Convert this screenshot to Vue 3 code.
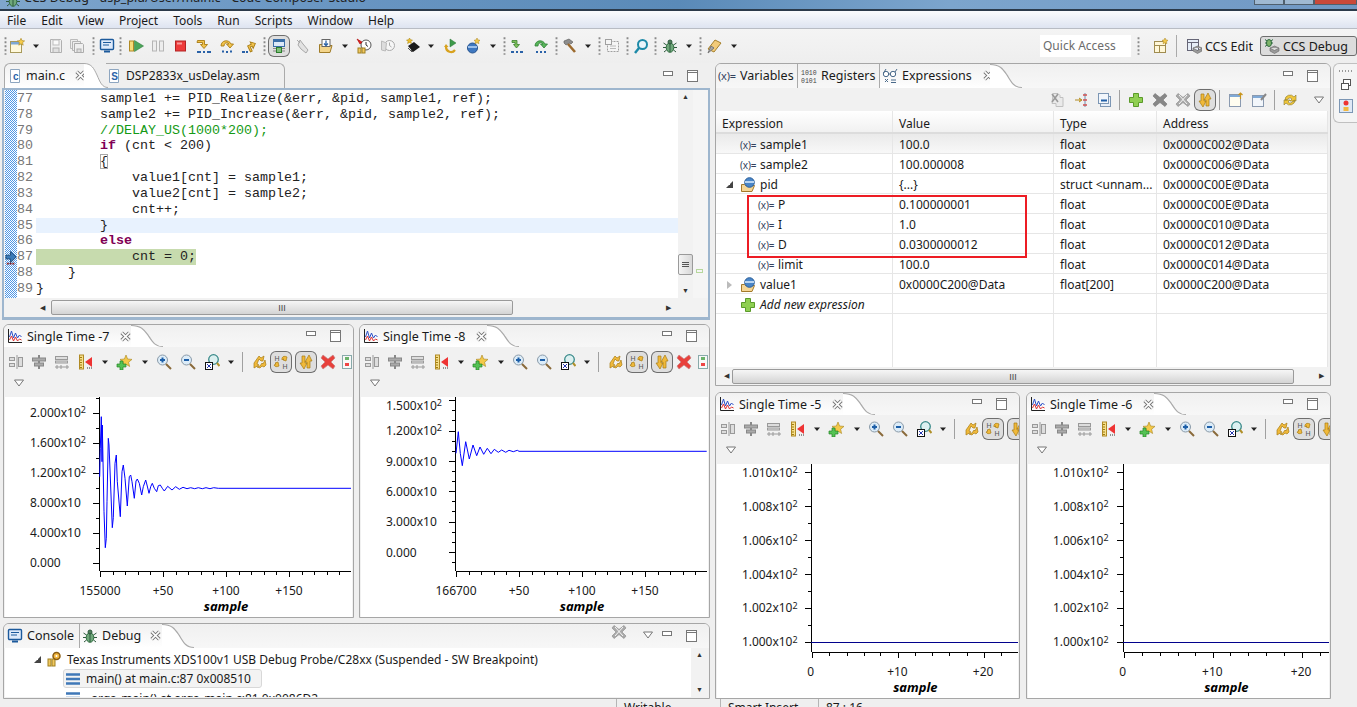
<template>
  <div class="page">
    <div class="titlebar">
      <svg class="ico title-ico" viewBox="0 0 16 16" v-html="icons.bug"></svg>
      <span class="title-text">CCS Debug - dsp_pid/User/main.c - Code Composer Studio</span>
      <div class="win-btns"><i></i><i></i><i class="red"></i></div>
    </div>
    <div class="menubar">
      <span v-for="m in menus" :key="m">{{ m }}</span>
    </div>
    <div class="toolbar">
      <div class="tools main-tools">
        <svg v-for="(t, i) in mainTools" :key="i" viewBox="0 0 16 16" preserveAspectRatio="none" :class="['ico', t.kind, { on: t.on }]" :style="{ marginLeft: t.gap + 'px' }" v-html="icons[t.name]"></svg>
      </div>
      <div class="quick">Quick Access</div>
      <svg class="ico grip grip-q" viewBox="0 0 16 16" preserveAspectRatio="none" v-html="icons.grip"></svg>
      <svg class="ico persp-open" viewBox="0 0 16 16" v-html="icons.persp"></svg>
      <div class="persp-sep"></div>
      <div class="persp">
        <svg class="ico" viewBox="0 0 16 16" v-html="icons.edit"></svg>CCS Edit
      </div>
      <div class="persp active">
        <svg class="ico" viewBox="0 0 16 16" v-html="icons.bugdb"></svg>CCS Debug
      </div>
    </div>

    <div class="workspace">
      <div class="col-left">
        <section class="panel editor">
          <div class="tabs">
            <div class="tab active main-tab">
              <svg class="ico" viewBox="0 0 16 16" v-html="icons.cfile"></svg><span>main.c</span>
              <svg class="close" viewBox="0 0 10 10" v-html="icons.close"></svg>
            </div>
            <svg class="curve" viewBox="0 0 24 25" preserveAspectRatio="none"><path d="M0 .5C8 .5 10 6 13 12 16 19 18 24.5 24 24.5V25H0Z" fill="#fff" /><path d="M0 .5C8 .5 10 6 13 12 16 19 18 24.5 24 24.5" fill="none" stroke="#aaa" /></svg>
            <div class="tab plain dsp">
              <svg class="ico" viewBox="0 0 16 16" v-html="icons.sfile"></svg><span>DSP2833x_usDelay.asm</span>
            </div>
            <div class="win-ctl"><svg viewBox="0 0 40 14" v-html="icons.minmax"></svg></div>
          </div>
          <div class="editor-body">
            <div class="editor-main">
              <div class="overview"></div>
              <svg class="pc-marker" viewBox="0 0 14 16"><path d="M1 5h5V1l6 6-6 6V9H1z" fill="#3a7ab8" stroke="#1c4a78" /><path d="M2 14h9" stroke="#8a1a1a" stroke-width="2" stroke-dasharray="2 1" /></svg>
              <div class="line-nums"><div v-for="l in lines" :key="l.n">{{ l.n }}</div></div>
              <div class="code">
                <div v-for="l in lines" :key="l.n" :class="['code-line', l.cls]"><span v-for="(p, i) in l.parts" :key="i" :class="p[1]">{{ p[0] }}</span></div>
              </div>
              <div class="vscroll">
                <span class="arr">▲</span>
                <div class="vthumb"><i></i><i></i><i></i></div>
                <span class="arr">▼</span>
              </div>
              <div class="ruler"><i></i></div>
            </div>
            <div class="hscroll editor-h">
              <span class="arr">◀</span>
              <div class="hthumb"><b>III</b></div>
              <span class="arr end">▶</span>
            </div>
          </div>
        </section>

        <div class="chart-row left-charts">
          <section v-for="c in leftCharts" :key="c.title" class="panel chart">
            <div class="tabs chart-tabs">
              <div class="tab active chart-tab">
                <svg class="ico" viewBox="0 0 16 16" v-html="icons.graph"></svg><span>{{ c.title }}</span>
                <svg class="close" viewBox="0 0 10 10" v-html="icons.close"></svg>
              </div>
              <svg class="curve" viewBox="0 0 24 25" preserveAspectRatio="none"><path d="M0 .5C8 .5 10 6 13 12 16 19 18 24.5 24 24.5V25H0Z" fill="#fff" /><path d="M0 .5C8 .5 10 6 13 12 16 19 18 24.5 24 24.5" fill="none" stroke="#aaa" /></svg>
              <div class="win-ctl"><svg viewBox="0 0 40 14" v-html="icons.minmax"></svg></div>
            </div>
            <div class="chart-tools">
              <div class="tools chart-row1">
                <svg v-for="(t, i) in chartTools" :key="i" viewBox="0 0 16 16" preserveAspectRatio="none" :class="['ico', t.kind, { on: t.on }]" :style="{ marginLeft: t.gap + 'px' }" v-html="icons[t.name]"></svg>
              </div>
              <div class="chart-row2"><svg class="ico" viewBox="0 0 16 16" v-html="icons.viewmenu"></svg></div>
            </div>
            <svg class="plot" :viewBox="c.box.join(' ')" :style="{ height: c.box[3] + 'px' }">
              <path :d="c.axes" fill="none" stroke="#000" shape-rendering="crispEdges" />
              <path :d="c.wave" fill="none" stroke="#0000ff" />
              <text v-for="l in c.yLabels" :key="l.y" :x="c.labelX" :y="l.y + 4.5" class="lbl">{{ l.text }}<tspan v-if="l.sup" dy="-3.5" font-size="9">{{ l.sup }}</tspan></text>
              <text v-for="l in c.xLabels" :key="l.x" :x="l.x" :y="c.xLabelY" text-anchor="middle" class="lbl">{{ l.text }}</text>
              <text :x="c.sampleX" :y="c.sampleY" text-anchor="middle" class="sample">sample</text>
            </svg>
          </section>
        </div>

        <section class="panel debug">
          <div class="tabs debug-tabs">
            <div class="tab plain console">
              <svg class="ico" viewBox="0 0 16 16" v-html="icons.console"></svg><span>Console</span>
            </div>
            <div class="tab active debug-tab">
              <svg class="ico" viewBox="0 0 16 16" v-html="icons.bug"></svg><span>Debug</span>
              <svg class="close" viewBox="0 0 10 10" v-html="icons.close"></svg>
            </div>
            <svg class="curve" viewBox="0 0 24 25" preserveAspectRatio="none"><path d="M0 .5C8 .5 10 6 13 12 16 19 18 24.5 24 24.5V25H0Z" fill="#fff" /><path d="M0 .5C8 .5 10 6 13 12 16 19 18 24.5 24 24.5" fill="none" stroke="#aaa" /></svg>
            <svg class="ico debug-rm" viewBox="0 0 16 16" v-html="icons.xx"></svg>
            <svg class="ico debug-menu" viewBox="0 0 16 16" v-html="icons.viewmenu"></svg>
            <div class="win-ctl debug-ctl"><svg viewBox="0 0 40 14" v-html="icons.minmax"></svg></div>
          </div>
          <div class="debug-body">
            <div class="tree">
              <div class="tree-row probe">
                <span class="twist open"></span>
                <svg class="ico" viewBox="0 0 16 16" v-html="icons.probe"></svg>
                <span>Texas Instruments XDS100v1 USB Debug Probe/C28xx (Suspended - SW Breakpoint)</span>
              </div>
              <div class="tree-row frame sel">
                <svg class="ico" viewBox="0 0 16 16" v-html="icons.stack"></svg>
                <span>main() at main.c:87 0x008510</span>
              </div>
              <div class="tree-row frame">
                <svg class="ico" viewBox="0 0 16 16" v-html="icons.stack"></svg>
                <span>_args_main() at args_main.c:81 0x0086D2</span>
              </div>
            </div>
            <div class="vscroll debug-v"><span class="arr">▲</span><span class="arr">▼</span></div>
          </div>
        </section>
      </div>

      <div class="col-right">
        <section class="panel expr">
          <div class="tabs expr-tabs">
            <div class="tab plain vars"><span class="xeq big">(x)=</span><span>Variables</span></div>
            <div class="tab plain regs"><svg class="ico" viewBox="0 0 16 16" v-html="icons.regs"></svg><span>Registers</span></div>
            <div class="tab active expr-tab">
              <svg class="ico" viewBox="0 0 16 16" v-html="icons.glasses"></svg><span>Expressions</span>
              <svg class="close" viewBox="0 0 10 10" v-html="icons.close"></svg>
            </div>
            <svg class="curve" viewBox="0 0 24 25" preserveAspectRatio="none"><path d="M0 .5C8 .5 10 6 13 12 16 19 18 24.5 24 24.5V25H0Z" fill="#fff" /><path d="M0 .5C8 .5 10 6 13 12 16 19 18 24.5 24 24.5" fill="none" stroke="#aaa" /></svg>
            <div class="win-ctl"><svg viewBox="0 0 40 14" v-html="icons.minmax"></svg></div>
          </div>
          <div class="tools expr-tools">
            <svg v-for="(t, i) in exprTools" :key="i" viewBox="0 0 16 16" preserveAspectRatio="none" :class="['ico', t.kind, { on: t.on }]" :style="{ marginLeft: t.gap + 'px' }" v-html="icons[t.name]"></svg>
          </div>
          <div class="table">
            <div class="thead row">
              <div v-for="h in ['Expression', 'Value', 'Type', 'Address']" :key="h" class="cell">{{ h }}</div>
            </div>
            <div v-for="(r, i) in rows" :key="i" :class="['row', { selrow: i === 0 }]">
              <div class="cell name-cell">
                <span class="name" :style="{ paddingLeft: r.indent + 'px' }">
                  <span v-if="r.twist" :class="['twist', r.twist]"></span>
                  <svg v-if="r.icon" class="ico" viewBox="0 0 16 16" v-html="icons[r.icon]"></svg>
                  <span v-else class="xeq">(x)=</span>
                  <span :class="{ addnew: r.add }">{{ r.name }}</span>
                </span>
              </div>
              <div class="cell">{{ r.value }}</div>
              <div class="cell">{{ r.type }}</div>
              <div class="cell">{{ r.addr }}</div>
            </div>
            <div class="row filler"><div class="cell"></div><div class="cell"></div><div class="cell"></div><div class="cell"></div></div>
            <div class="redbox"></div>
          </div>
          <div class="hscroll expr-h">
            <span class="arr">◀</span>
            <div class="hthumb"><b>III</b></div>
            <span class="arr end">▶</span>
          </div>
        </section>

        <div class="chart-row right-charts">
          <section v-for="c in rightCharts" :key="c.title" class="panel chart">
            <div class="tabs chart-tabs">
              <div class="tab active chart-tab">
                <svg class="ico" viewBox="0 0 16 16" v-html="icons.graph"></svg><span>{{ c.title }}</span>
                <svg class="close" viewBox="0 0 10 10" v-html="icons.close"></svg>
              </div>
              <svg class="curve" viewBox="0 0 24 25" preserveAspectRatio="none"><path d="M0 .5C8 .5 10 6 13 12 16 19 18 24.5 24 24.5V25H0Z" fill="#fff" /><path d="M0 .5C8 .5 10 6 13 12 16 19 18 24.5 24 24.5" fill="none" stroke="#aaa" /></svg>
              <div class="win-ctl"><svg viewBox="0 0 40 14" v-html="icons.minmax"></svg></div>
            </div>
            <div class="chart-tools">
              <div class="tools chart-row1">
                <svg v-for="(t, i) in chartTools" :key="i" viewBox="0 0 16 16" preserveAspectRatio="none" :class="['ico', t.kind, { on: t.on }]" :style="{ marginLeft: t.gap + 'px' }" v-html="icons[t.name]"></svg>
              </div>
              <div class="chart-row2"><svg class="ico" viewBox="0 0 16 16" v-html="icons.viewmenu"></svg></div>
            </div>
            <svg class="plot" :viewBox="c.box.join(' ')" :style="{ height: c.box[3] + 'px' }">
              <path :d="c.axes" fill="none" stroke="#000" shape-rendering="crispEdges" />
              <path :d="c.flat" stroke="#00008c" shape-rendering="crispEdges" />
              <text v-for="l in c.yLabels" :key="l.y" :x="c.labelX" :y="l.y + 4.5" class="lbl">{{ l.text }}<tspan v-if="l.sup" dy="-3.5" font-size="9">{{ l.sup }}</tspan></text>
              <text v-for="l in c.xLabels" :key="l.x" :x="l.x" :y="c.xLabelY" text-anchor="middle" class="lbl">{{ l.text }}</text>
              <text :x="c.sampleX" :y="c.sampleY" text-anchor="middle" class="sample">sample</text>
            </svg>
          </section>
        </div>
      </div>

      <div class="trim">
        <div class="trim-box">
          <span class="trim-dots"></span>
          <svg class="ico" viewBox="0 0 16 16" v-html="icons.restore"></svg>
          <svg class="ico" viewBox="0 0 16 16" v-html="icons.bpview"></svg>
        </div>
      </div>
    </div>

    <div class="statusbar">
      <div class="st">Writable</div>
      <div class="st">Smart Insert</div>
      <div class="st">87 : 16</div>
    </div>
  </div>
</template>

<script setup>
const menus = ['File', 'Edit', 'View', 'Project', 'Tools', 'Run', 'Scripts', 'Window', 'Help']

// small 16x16 glyphs, drawn after the eclipse ones
const icons = {
  grip: '<path d="M8 1v14" stroke="#8a8a8a" stroke-width="10" stroke-dasharray="1.6 1.6"/>',
  sep: '<path d="M8 0v16" stroke="#a0a0a0" stroke-width="16"/>',
  arrow: '<path d="M2 5h12l-6 7z" fill="#222"/>',
  viewmenu: '<path d="M3.5 5h9l-4.5 6z" fill="#fff" stroke="#777"/>',
  close: '<path d="M1.500 1.500l7 7M8.500 1.500l-7 7" stroke="#777" stroke-width="3.200"/><path d="M1.500 1.500l7 7M8.500 1.500l-7 7" stroke="#fff" stroke-width="1.400"/>',
  minmax: '<rect x="2.5" y="2.5" width="9" height="4" fill="#fff" stroke="#777"/><rect x="26.5" y="1.5" width="10" height="11" fill="#fff" stroke="#777"/><path d="M26.5 3.5h10" stroke="#777"/>',
  new: '<rect x="1.5" y="3.5" width="11" height="11" fill="#fff9dc" stroke="#a89a5c"/><rect x="2" y="4" width="10" height="2.5" fill="#7fa9d6"/><path d="M12 .3l1 2.3 2.6.3-2 1.7.6 2.6-2.2-1.4-2.2 1.4.6-2.6-2-1.7 2.6-.3z" fill="#f6cc4c" stroke="#a8841c" stroke-width=".6"/>',
  save: '<path d="M2.5 1.5h10l1 1v12h-11z" fill="#efefef" stroke="#b0b0b0"/><rect x="5" y="2" width="6" height="5" fill="#fafafa" stroke="#bdbdbd"/><rect x="5" y="10" width="6" height="4.5" fill="#e0e0e0" stroke="#b0b0b0"/>',
  saveall: '<path d="M1.5 1.5h7v9h-7z" fill="#eee" stroke="#bbb"/><path d="M3.5 3.5h8v9h-8z" fill="#eee" stroke="#b5b5b5"/><path d="M5.5 5.5h8l1 1v8h-9z" fill="#efefef" stroke="#adadad"/><rect x="8" y="11" width="4" height="3.5" fill="#ddd" stroke="#adadad"/>',
  console: '<rect x="1.5" y="1.5" width="13" height="10" rx="1" fill="#dfeafa" stroke="#1c5a9c" stroke-width="1.4"/><path d="M4 4.5h8M4 7h6" stroke="#1c5a9c"/><path d="M5 13.5h6" stroke="#1c5a9c" stroke-width="2"/>',
  resume: '<rect x="1.5" y="3" width="4" height="10" fill="#f7dc7a" stroke="#b08a24"/><path d="M6.5 2.5l9 5.5-9 5.5z" fill="#4da65a" stroke="#2f7d3c" stroke-width=".6"/>',
  pause: '<rect x="2.5" y="3" width="4" height="10" fill="#ededed" stroke="#b5b5b5"/><rect x="9.5" y="3" width="4" height="10" fill="#ededed" stroke="#b5b5b5"/>',
  stop: '<rect x="2.5" y="3" width="10" height="10" fill="#ee3b3b" stroke="#b32424"/><rect x="4" y="4.5" width="5" height="2" fill="#f89a9a"/>',
  into: '<path d="M1.5 2.5h7v4h3l-3.5 4-3.5-4h2v-2h-5.500z" fill="#f3c44c" stroke="#a87c14" stroke-width=".9"/><path d="M1 14h4M7 14h2M11 14h4" stroke="#2a62a8" stroke-width="2"/>',
  over: '<path d="M2 8c0-6 8-7 10-2h2.500l-3.500 4-3.500-4h2.500c-2-2.500-5-1-5 2z" fill="#f3c44c" stroke="#a87c14" stroke-width=".9"/><path d="M3 13.500h2M7 14h2M11 13.500h2" stroke="#2a62a8" stroke-width="2"/>',
  ret: '<path d="M6 13V6.500h4V4l4 3.500-4 3.500V8.500H8V13z" fill="#f3c44c" stroke="#a87c14" stroke-width=".9" transform="rotate(-25 9 8)"/><path d="M0 14h3M4 14h2" stroke="#2a62a8" stroke-width="2"/>',
  connect: '<rect x="2.500" y="1.500" width="11" height="7" fill="#dce9f8" stroke="#3a6ea8"/><rect x="3" y="2" width="10" height="2" fill="#3a6ea8"/><path d="M2 10.500h12M2 13h12" stroke="#888"/><rect x="5.500" y="9.500" width="5" height="5" fill="#7ec07a" stroke="#2c7d2c"/>',
  hand: '<path d="M3 2l3 3M6 2l3 4 5 6-2 3-5-4-3-4z" fill="#e2e2e2" stroke="#a8a8a8"/>',
  folderdown: '<path d="M1.500 6.500h3l1 1h8.500l-2 7h-10.500z" fill="#f3d48a" stroke="#a07c28"/><rect x="4" y="1.500" width="8" height="7" fill="#fff" stroke="#666"/><path d="M8 2.500v4.500M6 5.500l2 2 2-2" stroke="#2a62a8" fill="none" stroke-width="1.300"/>',
  clockred: '<circle cx="10" cy="7" r="5" fill="#fff" stroke="#555"/><path d="M10 4v3l2 1.500" stroke="#333" fill="none"/><path d="M1 1l5 3-2 2z" fill="#d22" stroke="#a00" stroke-width=".6"/><rect x="2" y="10" width="3" height="5" fill="#f0c860" stroke="#a08020"/><rect x="6" y="10" width="3" height="5" fill="#f0c860" stroke="#a08020"/>',
  clockgrey: '<circle cx="9.500" cy="7.500" r="5" fill="#f6f6f6" stroke="#aaa"/><path d="M9.500 4.500v3l2 1.500" stroke="#aaa" fill="none"/><path d="M1.500 3l5 2-1 8-4-1z" fill="#ddd" stroke="#bbb"/>',
  chip: '<path d="M4.500 0l1 1.800 2 .2-1.500 1.500.4 2-1.900-1-1.900 1 .4-2L1.500 2l2-.2z" fill="#f0c030" stroke="#a08010" stroke-width=".5"/><path d="M3 8l6-4 6 5-7 5z" fill="#1a1a1a"/><path d="M3 10l4 4M6 12l2 2" stroke="#555"/>',
  reload: '<path d="M3 9a5 5 0 0 0 9 3" fill="none" stroke="#d8a21f" stroke-width="2.200"/><path d="M1 9l2-3 2.500 3z" fill="#d8a21f"/><path d="M7 1l6 4-6 4z" fill="#3d9a4a" stroke="#2b7535" stroke-width=".5"/>',
  ball: '<circle cx="7.500" cy="10" r="5" fill="#3f78c0" stroke="#25538f"/><path d="M3 9h9" stroke="#9cc0ea" stroke-width="2"/><path d="M12 0l1 2 2 .3-1.500 1.400.4 2-1.900-1-1.900 1 .4-2L9 2.300l2-.3z" fill="#f4c94a" stroke="#a8841c" stroke-width=".5"/>',
  stepi: '<path d="M3 2.500h5v4h2.500L7.500 10 4.500 6.500H6v-2H3z" fill="#7ec05a" stroke="#3b8030" stroke-width=".8"/><path d="M2 14h3M7 14h2M11 14h3" stroke="#2a62a8" stroke-width="2"/>',
  stepo: '<path d="M2 8c0-6 8-7 10-2h2.500L11 10 7.500 6h2.500C8 3.500 5 5 5 8z" fill="#58b45a" stroke="#2f8035" stroke-width=".8"/><path d="M3 14h2M7 14h2M11 14h2" stroke="#2a62a8" stroke-width="2"/>',
  hammer: '<path d="M3 3l5-2 4 3-2 2-2-1-1 1-2 1-2-2z" fill="#8d8d8d" stroke="#555" stroke-width=".6"/><path d="M7 6l7 8" stroke="#9c6a2e" stroke-width="2.600"/>',
  dashdoc: '<rect x="3.500" y="3.500" width="11" height="10" fill="#f5f5f5" stroke="#a0a0a0" stroke-dasharray="2 1"/><rect x="1.500" y="1.500" width="6" height="5" fill="#f5f5f5" stroke="#a0a0a0"/><path d="M6 8h6M6 10.500h6" stroke="#bbb"/>',
  search: '<circle cx="9.500" cy="6.500" r="4.500" fill="#eaf5fb" stroke="#1d8aa8" stroke-width="2"/><path d="M6 10l-4 5" stroke="#1d8aa8" stroke-width="2.400"/>',
  bug: '<ellipse cx="8" cy="9.500" rx="3.800" ry="4.800" fill="#6fa87a" stroke="#2e6a3e"/><circle cx="8" cy="4" r="2" fill="#4f7f5a" stroke="#2e5a3e"/><path d="M8 5v9M1.500 5l3 2M1 9.500h3M2 14l2.500-2M14.500 5l-3 2M15 9.500h-3M14 14l-2.500-2" stroke="#2e5a3e" fill="none"/>',
  wand: '<path d="M1 11l7-9 6 3-7 9z" fill="#f2cb7a" stroke="#a5802c"/><path d="M1 15l3-7 3 2z" fill="#aaa" stroke="#777"/>',
  persp: '<rect x="1.500" y="3.500" width="11" height="11" fill="#fff7d8" stroke="#a08c50"/><path d="M1.500 7.500h11M6.500 7.500v7" stroke="#a08c50"/><path d="M12 0l1 2 2 .3-1.500 1.400.4 2-1.900-1-1.900 1 .4-2L9 2.300l2-.3z" fill="#f4c94a" stroke="#a8841c" stroke-width=".5"/>',
  edit: '<rect x="1.500" y="1.500" width="11" height="11" fill="#e6eef8" stroke="#667"/><path d="M1.500 4.500h11M5.500 4.500v8" stroke="#667"/><path d="M7 10l4.500-2 4.500 2-4.500 2.500zM7 10v3l4.500 2.500L16 13v-3" fill="#9a9a9a" stroke="#666" stroke-width=".6"/>',
  bugdb: '<ellipse cx="5" cy="5" rx="2.500" ry="3.500" fill="#7fb56a" stroke="#2e6a3e"/><path d="M1 1.500l2 1.500M1 5h2M1 8.500l2-1.500M9 1.500L7 3M9 5H7" stroke="#2e6a3e"/><path d="M6 10l4.500-2 4.500 2-4.500 2.500zM6 10v3l4.500 2.500L15 13v-3" fill="#9a9a9a" stroke="#666" stroke-width=".6"/>',
  cfile: '<path d="M3.500 1.500h9v13h-9z" fill="#fff" stroke="#8ea6c0"/><text x="6" y="12" font-size="10" font-weight="700" font-family="Liberation Sans" fill="#2a62a8">c</text>',
  sfile: '<path d="M3.500 1.500h9v13h-9z" fill="#fff" stroke="#8ea6c0"/><text x="5.200" y="12" font-size="10" font-weight="700" font-family="Liberation Sans" fill="#2a62a8">S</text>',
  graph: '<path d="M1.500 1v13.500H15" fill="none" stroke="#222"/><path d="M2.500 9l2-6 2 7 2-5 2 5 2-3 2 2" fill="none" stroke="#2b50c8"/><path d="M2.500 12l2-4 2 5 2-4 2 4 2-2 2 1" fill="none" stroke="#e03030"/>',
  align: '<rect x="1.500" y="3.500" width="5" height="3" fill="#ddd" stroke="#999"/><rect x="1.500" y="9.500" width="5" height="3" fill="#ddd" stroke="#999"/><path d="M9 1v14" stroke="#999"/><rect x="10.500" y="3.500" width="4" height="9" fill="#ddd" stroke="#999"/>',
  center: '<path d="M8 1v14" stroke="#888" stroke-width="2"/><rect x="1.500" y="4" width="13" height="3" fill="#aaa" stroke="#888"/><rect x="3.500" y="9" width="9" height="3" fill="#aaa" stroke="#888"/>',
  spread: '<rect x="1.500" y="2.500" width="12" height="3" fill="#ddd" stroke="#999"/><rect x="1.500" y="7" width="12" height="2" fill="#ddd" stroke="#999"/><path d="M1 13h14M3 11v4M13 11v4M7 11v4" stroke="#999"/>',
  ruler: '<rect x="1.500" y="1" width="4" height="14" fill="#f6df8a" stroke="#b08a24"/><path d="M2 3.500h2M2 6h2M2 8.500h2M2 11h2M2 13.500h2" stroke="#a07c10"/><path d="M14 3l-7 5 7 5z" fill="#e33"/><path d="M9 14h1M11 14h1M13 14h1" stroke="#333"/>',
  pstar: '<path d="M10 1l1.600 4 4.400.4-3.400 2.800 1 4.300L10 10.200l-3.600 2.300 1-4.300-3.400-2.800 4.400-.4z" fill="#f4c94a" stroke="#a8841c" stroke-width=".6"/><path d="M1 10h3V7h3v3h3v3H7v3H4v-3H1z" fill="#54c254" stroke="#278527" stroke-width=".7"/>',
  zoomin: '<circle cx="6.500" cy="6" r="5" fill="#dcecf8" stroke="#8a9aa8"/><path d="M4 6h5M6.500 3.500v5" stroke="#1d5fa8" stroke-width="2"/><path d="M10 10l5 5" stroke="#8a6a3a" stroke-width="2"/>',
  zoomout: '<circle cx="6.500" cy="6" r="5" fill="#dcecf8" stroke="#8a9aa8"/><path d="M4 6h5" stroke="#1d5fa8" stroke-width="2"/><path d="M10 10l5 5" stroke="#8a6a3a" stroke-width="2"/>',
  zoombox: '<circle cx="9.500" cy="5.500" r="4.800" fill="#dcf0f0" stroke="#3a8a8a" stroke-width="1.300"/><path d="M13 9l2.500 3" stroke="#b0902a" stroke-width="2"/><rect x="1.500" y="8.500" width="7" height="7" fill="#fff" stroke="#111"/><path d="M3 10l4 4M7 10l-4 4" stroke="#2a3ab0"/>',
  sync: '<path d="M3 9l5-7 2 2 3-2-1 5h-2L8 5 6 10l2 1-5 3zM6 13l3-1 2-3 1 1 2-4 1 5-2 2-2-1-2 2z" fill="#f0b93a" stroke="#a87c14" stroke-width=".7"/>',
  hsync: '<path d="M9 4c1-2 3-2 5-1l-1 4-3-1 1-1c-1 0-1 0-2 1zM1 11c1 2 3 2 5 1l-1-4-3 1 1 1z" fill="#f0b93a" stroke="#a87c14" stroke-width=".7"/><text x="1.500" y="7" font-size="7" font-family="Liberation Sans" fill="#555">H</text><text x="9.500" y="15" font-size="7" font-family="Liberation Sans" fill="#555">H</text>',
  dsync: '<path d="M4 2h3v7l2 0-3 6-4-6h2zM9 14V8H7l4-7 3 6h-2v7z" fill="#f0b93a" stroke="#a87c14" stroke-width=".7"/>',
  redx: '<path d="M3 1l5 4 5-4 2 3-4 4 4 4-2 3-5-4-5 4-2-3 4-4-4-4z" fill="#e8413c" stroke="#c58080" stroke-width=".7"/>',
  misc: '<rect x="3.500" y="1.500" width="9" height="13" fill="#f8f8f8" stroke="#8aa"/><rect x="6" y="3" width="4" height="3" fill="#6bb36b"/><rect x="6" y="9" width="4" height="3" fill="#e44"/>',
  disabledx: '<path d="M3 1.500h5l2 2v2h3v9H6v-3H2z" fill="#eaeaea" stroke="#c0c0c0"/><path d="M2 2l6 8M8 2l-6 8" stroke="#9a9a9a" stroke-width="1.600"/>',
  collapse: '<path d="M1 8h6M5 6l3 2-3 2" fill="#f3d87c" stroke="#b08a24"/><path d="M11 1v14" stroke="#6f8fb0"/><path d="M9 3h4M9 8h4M9 13h4" stroke="#d05050" stroke-width="1.500"/>',
  minus: '<rect x="3.500" y="4.500" width="10" height="10" fill="#e8eff8" stroke="#7c96b4"/><rect x="1.500" y="1.500" width="10" height="10" fill="#f2f6fb" stroke="#7c96b4"/><path d="M4 8.500h6" stroke="#1f5ea8" stroke-width="2"/>',
  plus: '<path d="M5.500 1.500h5v4h4v5h-4v4h-5v-4h-4v-5h4z" fill="#8fcf52" stroke="#5b9a2a"/>',
  x: '<path d="M3 1.500l5 4 5-4 2 2.500-4 4 4 4-2 2.500-5-4-5 4-2-2.500 4-4-4-4z" fill="#888" stroke="#777" stroke-width=".6"/>',
  xx: '<path d="M3 1.500l5 4 5-4 2 2.500-4 4 4 4-2 2.500-5-4-5 4-2-2.500 4-4-4-4z" fill="#a9a9a9" stroke="#888" stroke-width=".6"/><path d="M4 3l8 9M12 3l-8 9" stroke="#fff" stroke-width=".9"/>',
  dnew: '<rect x="1.500" y="2.500" width="11" height="12" fill="#fffdf0" stroke="#8a9ab0"/><rect x="2" y="3" width="10" height="2" fill="#7fa9d6"/><path d="M12.500 1v6M10.500 3l2-2 2 2" stroke="#c8941c" fill="none" stroke-width="1.200"/>',
  dpin: '<rect x="1.500" y="3.500" width="11" height="11" fill="#f2f6fb" stroke="#8a9ab0"/><rect x="2" y="4" width="10" height="2" fill="#7fa9d6"/><path d="M10 8l5-6" stroke="#888" stroke-width="2"/>',
  dsyncr: '<path d="M3 8a5 5 0 0 1 9-3l2-2v6H8l2-2a3 3 0 0 0-5 1zM13 8a5 5 0 0 1-9 3l-2 2V8h6l-2 2a3 3 0 0 0 5-1z" fill="#f0c63a" stroke="#8a7a30" stroke-width=".6"/>',
  regs: '<text x="0" y="7" font-size="6.500" font-family="Liberation Mono" fill="#444">1010</text><text x="0" y="14.500" font-size="6.500" font-family="Liberation Mono" fill="#444">0101</text>',
  glasses: '<circle cx="4" cy="6" r="2.700" fill="#fff" stroke="#4a6a8a"/><circle cx="11" cy="6" r="2.700" fill="#fff" stroke="#4a6a8a"/><path d="M1.500 5L4 1M13 4l2-3M6.500 6h2" stroke="#4a6a8a" fill="none"/><path d="M3 11l3 3M6 11l-3 3M9 12h5M9 14.500h5" stroke="#4a6a8a" fill="none"/>',
  vfolder: '<path d="M1.500 7.500h3l1 1h9l-2.500 6H1.500z" fill="#f6d695" stroke="#a3792a"/><circle cx="9.500" cy="5.500" r="4.800" fill="#4a86c8" stroke="#2a5e98"/><path d="M5 5h9" stroke="#b8d4f0" stroke-width="2"/>',
  probe: '<rect x="2" y="8" width="3" height="7" fill="#f0c860" stroke="#a08020"/><rect x="6" y="8" width="3" height="7" fill="#f0c860" stroke="#a08020"/><circle cx="10.500" cy="5" r="3.500" fill="#f3b840" stroke="#8a5c10" stroke-width="1.500"/><circle cx="10.500" cy="5" r="1" fill="#fff"/>',
  stack: '<path d="M1 3.500h14M1 8h14M1 12.500h14" stroke="#3f78b8" stroke-width="2.600"/>',
  restore: '<rect x="5.500" y="2.500" width="7" height="6" fill="#fff" stroke="#555"/><rect x="3.500" y="6.500" width="7" height="6" fill="#fff" stroke="#555"/>',
  bpview: '<rect x="1.500" y="1.500" width="13" height="13" fill="#dfe9f6" stroke="#7c96b4"/><circle cx="8" cy="5" r="2.500" fill="#e33"/><rect x="5.500" y="9" width="5" height="4" fill="#f2b840"/>'
}

const widths = { arrow: 8, grip: 3, sep: 1 }

// turn a list of icon centres into flex gaps, so the irregular eclipse toolbars line up
const spaced = (list, origin) => {
  let end = origin
  return list.map(([c, name, on]) => {
    const kind = widths[name] ? name : 'tool'
    const w = widths[name] || 16
    const gap = c - w / 2 - end
    end = c + w / 2
    return { name, kind, on, gap }
  })
}

const mainTools = spaced([
  [5, 'grip'], [17, 'new'], [36, 'arrow'], [56, 'save'], [77, 'saveall'], [93, 'grip'], [107, 'console'], [120, 'grip'],
  [136, 'resume'], [158, 'pause'], [181, 'stop'], [204, 'into'], [227, 'over'], [250, 'ret'], [264, 'grip'],
  [279, 'connect', true], [302, 'hand'], [326, 'folderdown'], [345, 'arrow'], [364, 'clockred'], [388, 'clockgrey'],
  [413, 'chip'], [431, 'arrow'], [451, 'reload'], [473, 'ball'], [493, 'arrow'], [504, 'grip'], [517, 'stepi'], [541, 'stepo'],
  [556, 'grip'], [569, 'hammer'], [588, 'arrow'], [599, 'grip'], [612, 'dashdoc'], [627, 'grip'], [641, 'search'], [655, 'grip'],
  [670, 'bug'], [689, 'arrow'], [700, 'grip'], [715, 'wand'], [734, 'arrow']
], 0)

const chartTools = spaced([
  [13, 'align'], [36, 'center'], [59, 'spread'], [83, 'ruler'], [102, 'arrow'], [121, 'pstar'], [142, 'arrow'],
  [161, 'zoomin'], [185, 'zoomout'], [209, 'zoombox'], [228, 'arrow'], [239, 'sep'], [256, 'sync'],
  [278, 'hsync', true], [303, 'dsync', true], [325, 'redx'], [344, 'misc']
], 1)

const exprTools = spaced([
  [1058, 'disabledx'], [1082, 'collapse'], [1105, 'minus'], [1119, 'sep'], [1136, 'plus'], [1160, 'x'], [1183, 'xx'],
  [1205, 'dsync', true], [1219, 'sep'], [1236, 'dnew'], [1259, 'dpin'], [1274, 'sep'], [1290, 'dsyncr'], [1319, 'viewmenu']
], 716)

const text = t => [[t, '']]
const lines = [
  { n: 77, parts: text('        sample1 += PID_Realize(&err, &pid, sample1, ref);') },
  { n: 78, parts: text('        sample2 += PID_Increase(&err, &pid, sample2, ref);') },
  { n: 79, parts: [['        ', ''], ['//DELAY_US(1000*200);', 'comment']] },
  { n: 80, parts: [['        ', ''], ['if', 'kw'], [' (cnt < 200)', '']] },
  { n: 81, parts: [['        ', ''], ['{', 'match']] },
  { n: 82, parts: text('            value1[cnt] = sample1;') },
  { n: 83, parts: text('            value2[cnt] = sample2;') },
  { n: 84, parts: text('            cnt++;') },
  { n: 85, parts: text('        }'), cls: 'current' },
  { n: 86, parts: [['        ', ''], ['else', 'kw']] },
  { n: 87, parts: [['            cnt = 0;', 'pc']] },
  { n: 88, parts: text('    }') },
  { n: 89, parts: text('}') }
]

const rows = [
  { name: 'sample1', indent: 24, value: '100.0', type: 'float', addr: '0x0000C002@Data' },
  { name: 'sample2', indent: 24, value: '100.000008', type: 'float', addr: '0x0000C006@Data' },
  { name: 'pid', indent: 24, icon: 'vfolder', twist: 'open', value: '{...}', type: 'struct <unnam...', addr: '0x0000C00E@Data' },
  { name: 'P', indent: 42, value: '0.100000001', type: 'float', addr: '0x0000C00E@Data' },
  { name: 'I', indent: 42, value: '1.0', type: 'float', addr: '0x0000C010@Data' },
  { name: 'D', indent: 42, value: '0.0300000012', type: 'float', addr: '0x0000C012@Data' },
  { name: 'limit', indent: 42, value: '100.0', type: 'float', addr: '0x0000C014@Data' },
  { name: 'value1', indent: 24, icon: 'vfolder', twist: 'closed', value: '0x0000C200@Data', type: 'float[200]', addr: '0x0000C200@Data' },
  { name: 'Add new expression', indent: 24, icon: 'plus', add: true, value: '', type: '', addr: '' }
]

// the plots use screen pixels, each viewBox is the white area of its panel
const buildAxes = ({ axisX, top, xAxisY, right, majorY, minorY, xStart, xStep, xCount }) => {
  let d = `M${axisX}.5 ${top}V${xAxisY}M${xStart} ${xAxisY}.5H${right}`
  majorY.forEach(y => { d += `M${axisX - 6} ${y}.5H${axisX}` })
  minorY.forEach(y => { d += `M${axisX - 3} ${y}.5H${axisX}` })
  for (let i = 0; i < xCount; i++) {
    const x = Math.round(xStart + i * xStep)
    d += `M${x}.5 ${xAxisY}v${i % 5 === 0 ? 6 : 4}`
  }
  return d
}

const toPath = (zoomed, ox) => 'M' + zoomed.map(([x, y]) => `${(ox + x / 3).toFixed(1)} ${(395 + y / 3).toFixed(1)}`).join('L')

const wave7 = [[299, 245], [301, 160], [304, 65], [306, 200], [307, 90], [312, 350], [316, 458], [319, 430], [321, 320], [325, 130], [327, 150], [333, 300], [337, 398], [340, 368], [345, 205], [349, 180], [352, 260], [361, 365], [366, 230], [370, 210], [375, 250], [382, 333], [388, 245], [392, 240], [396, 260], [403, 310], [408, 258], [412, 252], [418, 265], [425, 300], [430, 275], [437, 255], [441, 270], [447, 295], [452, 275], [457, 265], [463, 280], [470, 290], [475, 272], [481, 270], [487, 280], [493, 288], [503, 274], [516, 285], [527, 275], [538, 283], [549, 277], [561, 281], [572, 278], [584, 281], [595, 278], [607, 281], [618, 278], [630, 281], [641, 278], [655, 280], [1053, 280]]
const wave8 = [[303, 175], [310, 110], [316, 175], [322, 212], [332, 140], [343, 192], [354, 150], [365, 182], [375, 156], [386, 178], [397, 160], [408, 176], [418, 163], [430, 172], [440, 165], [452, 172], [462, 166], [475, 170], [487, 166], [492, 169], [1055, 169]]

const leftCharts = [
  {
    title: 'Single Time -7',
    box: [5, 397, 347, 220],
    axes: buildAxes({ axisX: 99, top: 397, xAxisY: 571, right: 351, majorY: [413, 443, 473, 503, 533, 563], minorY: [398, 428, 458, 488, 518, 548], xStart: 100, xStep: 12.6, xCount: 20 }),
    wave: toPath(wave7, 0),
    labelX: 30,
    yLabels: [
      { y: 412, text: '2.000x10', sup: '2' }, { y: 442, text: '1.600x10', sup: '2' }, { y: 472, text: '1.200x10', sup: '2' },
      { y: 502, text: '8.000x10' }, { y: 532, text: '4.000x10' }, { y: 562, text: '0.000' }
    ],
    xLabels: [{ x: 100, text: '155000' }, { x: 163, text: '+50' }, { x: 226, text: '+100' }, { x: 289, text: '+150' }],
    xLabelY: 595,
    sampleX: 226,
    sampleY: 611
  },
  {
    title: 'Single Time -8',
    box: [361, 397, 347, 220],
    axes: buildAxes({ axisX: 455, top: 397, xAxisY: 571, right: 707, majorY: [400, 431, 461, 491, 522, 552], minorY: [410, 420, 441, 451, 471, 481, 501, 511, 532, 542, 562], xStart: 456, xStep: 12.6, xCount: 20 }),
    wave: toPath(wave8, 355),
    labelX: 386,
    yLabels: [
      { y: 405, text: '1.500x10', sup: '2' }, { y: 430, text: '1.200x10', sup: '2' }, { y: 461, text: '9.000x10' },
      { y: 491, text: '6.000x10' }, { y: 521, text: '3.000x10' }, { y: 552, text: '0.000' }
    ],
    xLabels: [{ x: 456, text: '166700' }, { x: 519, text: '+50' }, { x: 582, text: '+100' }, { x: 645, text: '+150' }],
    xLabelY: 595,
    sampleX: 582,
    sampleY: 611
  }
]

const flatLabels = [472, 506, 540, 574, 608, 642].map((y, i) => ({ y, text: `1.0${10 - i * 2 < 10 ? '0' : ''}${10 - i * 2}x10`, sup: '2' }))
const flatMinor = [489, 523, 557, 591, 625]

const rightCharts = [
  {
    title: 'Single Time -5',
    box: [717, 464, 302, 234],
    axes: buildAxes({ axisX: 811, top: 464, xAxisY: 652, right: 1019, majorY: flatLabels.map(l => l.y), minorY: flatMinor, xStart: 812, xStep: 17.3, xCount: 13 }),
    flat: 'M811 642.500H1019',
    labelX: 742,
    yLabels: flatLabels,
    xLabels: [{ x: 811, text: '0' }, { x: 898, text: '+10' }, { x: 984, text: '+20' }],
    xLabelY: 676,
    sampleX: 916,
    sampleY: 692
  },
  {
    title: 'Single Time -6',
    box: [1028, 464, 302, 234],
    axes: buildAxes({ axisX: 1123, top: 464, xAxisY: 652, right: 1330, majorY: flatLabels.map(l => l.y), minorY: flatMinor, xStart: 1124, xStep: 17.9, xCount: 13 }),
    flat: 'M1123 642.500H1330',
    labelX: 1053,
    yLabels: flatLabels,
    xLabels: [{ x: 1123, text: '0' }, { x: 1213, text: '+10' }, { x: 1302, text: '+20' }],
    xLabelY: 676,
    sampleX: 1227,
    sampleY: 692
  }
]
</script>

<style>
html, body {
  margin: 0;
  overflow: hidden;
}
</style>

<style scoped>
.page {
  width: 1357px;
  height: 707px;
  overflow: hidden;
  background: #efefef;
  font-family: "Noto Sans", "Open Sans", sans-serif;
  font-size: 12px;
  color: #1a1a1a;
}
.ico {
  width: 16px;
  height: 16px;
  flex: none;
  display: block;
}

.titlebar {
  height: 9px;
  display: flex;
  overflow: hidden;
  background: linear-gradient(90deg, #7fa6cc 0%, #6c98c4 20%, #5a8ab8 50%, #7ca5cd 70%, #7098c4 100%);
  border-bottom: 2px solid #2b3a4a;
}
.title-ico {
  margin: -8px 0 0 5px;
}
.title-text {
  margin: -10px 0 0 3px;
  line-height: 16px;
  font-size: 12.5px;
  color: #222;
}
.win-btns {
  margin-left: auto;
  display: flex;
  height: 5px;
}
.win-btns i {
  width: 28px;
  border: 1px solid #50606e;
  border-top: 0;
  background: #9fb9d2;
}
.win-btns .red {
  width: 41px;
  background: #c9493a;
}

.menubar {
  height: 17px;
  display: flex;
  padding-left: 7px;
  gap: 15px;
  background: linear-gradient(#fafbfd, #dee4f1);
  line-height: 19px;
  font-size: 12px;
}
.menubar span {
  display: block;
}

.toolbar {
  height: 35px;
  display: flex;
  align-items: center;
  background: linear-gradient(#f4f4f4, #eee);
  border-top: 1px solid #b8bcc4;
  box-sizing: border-box;
}
.tools {
  display: flex;
  align-items: center;
}
.main-tools {
  width: 1040px;
  flex: none;
}
.grip {
  width: 3px;
  height: 20px;
}
.sep {
  width: 1px;
  height: 20px;
}
.arrow {
  width: 8px;
  height: 8px;
}
.tool.on {
  border-radius: 3px;
  background: #dedede;
  box-shadow: 0 0 0 2px #dedede, 0 0 0 3px #6e6e6e;
}
.quick {
  width: 91px;
  height: 22px;
  line-height: 22px;
  padding-left: 3px;
  box-sizing: border-box;
  background: #fff;
  color: #6c6c6c;
  flex: none;
}
.grip-q {
  margin-left: 6px;
}
.persp-open {
  margin-left: 13px;
}
.persp-sep {
  width: 1px;
  height: 22px;
  margin-left: 7px;
  background: #aaa;
}
.persp {
  display: flex;
  align-items: center;
  gap: 3px;
  margin-left: 9px;
  font-size: 12.5px;
  white-space: nowrap;
  flex: none;
}
.persp.active {
  margin-left: 7px;
  padding: 0 6px 0 3px;
  height: 20px;
  width: 97px;
  box-sizing: border-box;
  background: #dcdcdc;
  border: 1px solid #6e6e6e;
  border-radius: 3px;
}

.workspace {
  height: 636px;
  display: flex;
  padding-left: 3px;
}
.col-left {
  width: 707px;
  flex: none;
  display: flex;
  flex-direction: column;
}
.col-right {
  width: 616px;
  flex: none;
  margin-left: 5px;
  display: flex;
  flex-direction: column;
}

.panel {
  box-sizing: border-box;
  border: 1px solid #a6a6a6;
  border-radius: 6px 6px 0 0;
  background: #f1f1f1;
  display: flex;
  flex-direction: column;
  overflow: hidden;
}
.tabs {
  display: flex;
  align-items: stretch;
  flex: none;
  height: 24px;
  background: linear-gradient(#f0f0f0, #f7f7f7);
}
.tab {
  display: flex;
  align-items: center;
  gap: 4px;
  font-size: 12.5px;
  white-space: nowrap;
  box-sizing: border-box;
  padding-bottom: 1px;
}
.tab.active {
  background: linear-gradient(#f1f1f1, #fff);
  border-radius: 6px 0 0 0;
}
.tab.plain {
  border-right: 1px solid #aaa;
}
.curve {
  width: 32px;
  flex: none;
  height: 100%;
  margin-right: auto;
}
.close {
  width: 11px;
  height: 11px;
  margin-left: 7px;
  flex: none;
}
.win-ctl {
  margin-left: auto;
  width: 40px;
  display: flex;
  align-items: center;
  margin-right: 9px;
}
.win-ctl svg {
  width: 40px;
  height: 14px;
}

/* editor */
.editor {
  height: 257px;
  border: 0;
  border-radius: 0;
  background: none;
  margin-left: -1px;
  width: 708px;
}
.editor > .tabs {
  height: 25px;
  background: none;
}
.main-tab {
  padding-left: 2px;
  gap: 3px;
  width: 80px;
  margin-left: 2px;
  border: 1px solid #aaa;
  border-width: 1px 0 0 1px;
}
.editor .curve {
  width: 24px;
  margin-right: 0;
}
.dsp {
  margin-left: -2px;
  width: 179px;
  font-size: 12.1px;
  border: 1px solid #aaa;
  border-width: 1px 1px 0 0;
  border-radius: 0 6px 0 0;
}
.editor-body {
  flex: 1;
  min-height: 0;
  display: flex;
  flex-direction: column;
  border: 2px solid #9eb6ce;
  border-bottom-width: 3px;
  background: #f3f3f3;
}
.editor-main {
  flex: 1;
  min-height: 0;
  display: flex;
  position: relative;
}
.overview {
  width: 12px;
  margin-left: 1px;
  flex: none;
  background: repeating-conic-gradient(#4f97e6 0 25%, #fff 0 50%) 0 0 / 2px 2px;
}
.pc-marker {
  position: absolute;
  left: 1px;
  top: 160px;
  width: 13px;
  height: 16px;
}
.line-nums {
  width: 19px;
  padding: 1px 0 0 0;
  box-sizing: border-box;
  flex: none;
  background: #fff;
  color: #777;
  font-family: "Liberation Mono", monospace;
  font-size: 13.33px;
  line-height: 15.83px;
}
.code {
  flex: 1;
  min-width: 0;
  padding-top: 1px;
  background: #fff;
  font-family: "Liberation Mono", monospace;
  font-size: 13.33px;
  line-height: 15.83px;
  color: #222;
  overflow: hidden;
}
.code-line {
  height: 15.83px;
  white-space: pre;
}
.code-line.current {
  background: #e8f2fe;
}
.comment {
  color: #159a15;
}
.kw {
  color: #7f0055;
  font-weight: 700;
}
.match {
  outline: 1px solid #a8a8a8;
  outline-offset: -1px;
}
.pc {
  background: #c7dbae;
  display: inline-block;
}
.vscroll {
  width: 15px;
  flex: none;
  background: #f2f2f2;
  display: flex;
  flex-direction: column;
  justify-content: space-between;
  align-items: center;
  position: relative;
}
.arr {
  font-size: 7px;
  line-height: 14px;
  color: #333;
}
.vthumb {
  position: absolute;
  left: 0;
  top: 164px;
  width: 15px;
  height: 21px;
  box-sizing: border-box;
  border: 1px solid #9a9a9a;
  border-radius: 2px;
  background: linear-gradient(90deg, #f4f4f4, #d8d8d8);
  display: flex;
  flex-direction: column;
  align-items: center;
  justify-content: center;
  gap: 1px;
}
.vthumb i {
  width: 7px;
  height: 1px;
  background: #555;
}
.ruler {
  width: 15px;
  flex: none;
  position: relative;
  background: #f5f5f5;
}
.ruler i {
  position: absolute;
  left: 3px;
  top: 179px;
  width: 7px;
  height: 4px;
  border: 1px solid #b6d79c;
  box-sizing: border-box;
}
.hscroll {
  display: flex;
  align-items: center;
  height: 17px;
  flex: none;
  background: #f2f2f2;
}
.hthumb {
  height: 15px;
  box-sizing: border-box;
  border: 1px solid #9a9a9a;
  border-radius: 2px;
  background: linear-gradient(#f6f6f6, #d4d4d4);
  text-align: center;
  font-size: 9px;
  line-height: 13px;
  color: #444;
}
.hthumb b {
  font-weight: 400;
  font-family: "Liberation Sans", sans-serif;
}
.hscroll .end {
  margin-left: auto;
}
.editor-h {
  padding-left: 36px;
  padding-right: 37px;
  height: 19px;
}
.editor-h .hthumb {
  width: 462px;
  margin-left: 6px;
}

/* charts */
.chart-row {
  display: grid;
}
.left-charts {
  grid-template-columns: 351px 351px;
  column-gap: 5px;
  height: 294px;
  margin-top: 4px;
}
.right-charts {
  grid-template-columns: 305px 305px;
  column-gap: 6px;
  height: 307px;
  margin-top: 6px;
}
.chart {
  min-width: 0;
}
.chart-tabs {
  height: 22px;
}
.chart-tab {
  padding: 0 0 0 3px;
  width: 127px;
}
.chart-tools {
  flex: 1;
  min-height: 0;
  display: flex;
  flex-direction: column;
  overflow: hidden;
}
.chart-row1 {
  flex: 1;
  padding-top: 1px;
}
.chart-row2 {
  height: 22px;
  padding-left: 7px;
  flex: none;
  box-sizing: border-box;
}
.plot {
  display: block;
  flex: none;
  margin: 0 1px;
  width: calc(100% - 2px);
  background: #fff;
}
.lbl {
  font-family: "Noto Sans", sans-serif;
  font-size: 12px;
  fill: #1a1a1a;
}
.sample {
  font-family: "Noto Sans", sans-serif;
  font-size: 13px;
  font-weight: 700;
  font-style: italic;
  fill: #000;
}

/* debug view */
.debug {
  height: 76px;
  margin-top: 5px;
}
.debug-tabs {
  height: 24px;
}
.console {
  padding-left: 3px;
  width: 76px;
}
.debug-tab {
  padding-left: 2px;
  width: 82px;
}
.debug-tab .close {
  margin-left: 5px;
}
.debug .curve {
  margin-right: 0;
}
.debug-rm {
  margin-left: auto;
}
.debug-menu {
  margin-left: 13px;
  margin-top: 3px;
}
.debug-ctl {
  margin-left: 4px;
  flex: none;
}
.debug-body {
  flex: 1;
  min-height: 0;
  display: flex;
  background: #fff;
  margin: 0 1px 1px;
}
.tree {
  flex: 1;
  min-width: 0;
  padding-top: 1px;
  overflow: hidden;
}
.tree-row {
  display: flex;
  align-items: center;
  gap: 5px;
  height: 20px;
  white-space: nowrap;
}
.probe {
  padding-left: 29px;
}
.frame {
  padding-left: 60px;
  width: max-content;
  box-sizing: border-box;
}
.frame.sel {
  margin-left: 58px;
  padding: 0 10px 0 1px;
  height: 19px;
  border: 1px solid #d8d8d8;
  border-radius: 3px;
  background: #f3f3f3;
}
.debug-v {
  width: 17px;
}

/* tree twisties */
.twist {
  width: 7px;
  height: 7px;
  flex: none;
  box-sizing: border-box;
}
.twist.open {
  border: 3.5px solid transparent;
  border-right-color: #444;
  border-bottom-color: #444;
}
.twist.closed {
  width: 0;
  height: 0;
  border: 4px solid transparent;
  border-left: 5px solid #bbb;
}

/* expressions */
.expr {
  height: 323px;
}
.expr-tabs {
  height: 24px;
}
.vars {
  width: 82px;
  padding-left: 2px;
  gap: 2px;
}
.regs {
  width: 82px;
  padding-left: 3px;
}
.expr-tab {
  padding-left: 2px;
  width: 110px;
}
.xeq {
  font-size: 10px;
  color: #34425e;
  width: 16px;
  flex: none;
  letter-spacing: -.2px;
}
.xeq.big {
  font-size: 11px;
  width: 20px;
}
.expr-tools {
  height: 23px;
  flex: none;
  padding-top: 1px;
  box-sizing: border-box;
}
.table {
  flex: 1;
  min-height: 0;
  background: #fff;
  display: flex;
  flex-direction: column;
  position: relative;
  width: 612px;
}
.row {
  display: grid;
  grid-template-columns: 177px 161px 103px 171px;
  height: 20px;
  flex: none;
  border-bottom: 1px solid #e6e6e6;
  box-sizing: border-box;
}
.cell {
  border-right: 1px solid #e6e6e6;
  padding-left: 6px;
  line-height: 22px;
  white-space: nowrap;
  overflow: hidden;
}
.name-cell {
  padding-left: 0;
}
.thead {
  height: 23px;
  background: linear-gradient(#fff, #f1f1f1);
  border-bottom: 2px solid #dcdcdc;
}
.thead .cell {
  line-height: 25px;
}
.selrow {
  background: linear-gradient(#eaeaea, #f8f8f8);
}
.name {
  display: flex;
  align-items: center;
  gap: 4px;
  height: 21px;
  position: relative;
}
.name .twist {
  position: absolute;
  left: 10px;
  top: 7px;
}
.name .twist.closed {
  left: 11px;
}
.addnew {
  font-style: italic;
}
.filler {
  flex: 1;
  border-bottom: 0;
}
.redbox {
  position: absolute;
  left: 31px;
  top: 84px;
  width: 280px;
  height: 63px;
  box-sizing: border-box;
  border: 2px solid #ed1c24;
}
.expr-h {
  padding: 0 6px 0 8px;
  height: 18px;
}
.expr-h .hthumb {
  width: 562px;
  margin-left: 3px;
}

/* right trim */
.trim {
  width: 24px;
  flex: none;
  margin-left: 2px;
}
.trim-box {
  height: 58px;
  border: 1px solid #c0c0c0;
  border-right: 0;
  border-radius: 6px 0 0 6px;
  background: #f4f4f4;
  display: flex;
  flex-direction: column;
  align-items: center;
  gap: 5px;
}
.trim-dots {
  width: 14px;
  height: 2px;
  margin-top: 6px;
  background: repeating-linear-gradient(90deg, #999 0 1px, transparent 1px 3px);
}

/* status line, almost cut off by the window */
.statusbar {
  height: 8px;
  display: flex;
  padding-left: 616px;
  overflow: hidden;
}
.st {
  border-left: 1px solid #b5b5b5;
  padding: 2px 0 0 7px;
  line-height: 14px;
}
.st:nth-child(1) {
  width: 96px;
}
.st:nth-child(2) {
  width: 90px;
}
</style>
